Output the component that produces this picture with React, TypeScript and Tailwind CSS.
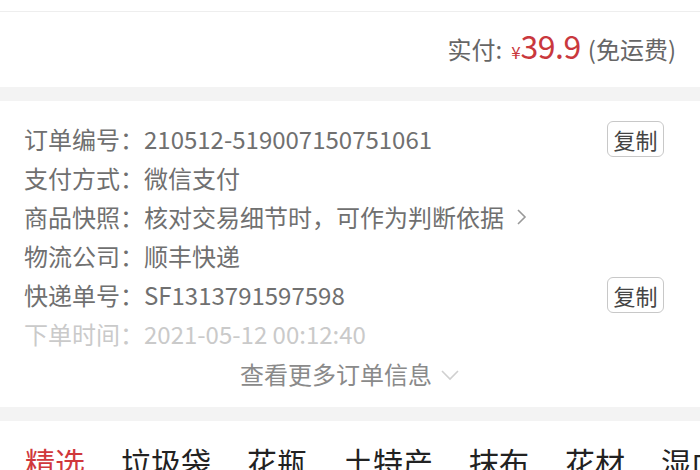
import React from "react";

const font = { fontFamily: '"Noto Sans CJK SC", "Noto Sans", sans-serif' };

function Row({ label, value, copy, faded, extra }: { label: string; value: string; copy?: boolean; faded?: boolean; extra?: React.ReactNode }) {
  return (
    <div className={`flex items-center h-[39px] pl-[24px] pr-[36px] text-[24px] leading-[39px] ${faded ? "text-[#cacaca]" : "text-[#707070]"}`}>
      <span className="whitespace-nowrap">{label}：</span>
      <span className="whitespace-nowrap">{value}</span>
      {extra}
      <div className="flex-1" />
      {copy && (
        <div className="w-[57px] h-[36px] border border-[#c8c8c8] rounded-[6px] flex items-center justify-center text-[22px] text-[#444] leading-none">
          复制
        </div>
      )}
    </div>
  );
}

export default function App() {
  const tabs = ["精选", "垃圾袋", "花瓶", "土特产", "抹布", "花材", "湿巾"];
  return (
    <div className="w-[700px] h-[470px] overflow-hidden bg-white" style={font}>
      <div className="h-[12px] border-b border-[#eeeeee]" />
      <div className="h-[75px] flex items-center justify-end pr-[24px] pb-[4px]">
        <div className="flex items-baseline">
          <span className="text-[24px] text-[#666]">实付:</span>
          <span className="text-[17px] text-[#c9383d] ml-[9px]">¥</span>
          <span className="text-[32px] text-[#c9383d] leading-none tracking-[-0.5px]">39.9</span>
          <span className="text-[24px] text-[#666] ml-[7px]">(免运费)</span>
        </div>
      </div>
      <div className="h-[14px] bg-[#f3f3f3]" />
      <div className="pt-[18px] pb-[12px]">
        <Row label="订单编号" value="210512-519007150751061" copy />
        <Row label="支付方式" value="微信支付" />
        <Row
          label="商品快照"
          value="核对交易细节时，可作为判断依据"
          extra={
            <svg width="12" height="18" viewBox="0 0 12 18" className="ml-[12px]">
              <path d="M2 2 L9 9 L2 16" fill="none" stroke="#999" strokeWidth="1.6" />
            </svg>
          }
        />
        <Row label="物流公司" value="顺丰快递" />
        <Row label="快递单号" value="SF1313791597598" copy />
        <Row label="下单时间" value="2021-05-12 00:12:40" faded />
        <div className="h-[42px] flex items-center justify-center text-[24px] text-[#8a8a8a]">
          <span>查看更多订单信息</span>
          <svg width="20" height="12" viewBox="0 0 20 12" className="ml-[8px] mt-[2px]">
            <path d="M2 2 L10 10 L18 2" fill="none" stroke="#d0d0d0" strokeWidth="1.6" />
          </svg>
        </div>
      </div>
      <div className="h-[14px] bg-[#f3f3f3]" />
      <div className="flex pl-[25px] gap-[36px] pt-[20px] text-[30px] leading-[40px] whitespace-nowrap">
        {tabs.map((t, i) => (
          <span key={t} className={i === 0 ? "text-[#d0383c]" : "text-[#222]"}>
            {t}
          </span>
        ))}
      </div>
    </div>
  );
}
